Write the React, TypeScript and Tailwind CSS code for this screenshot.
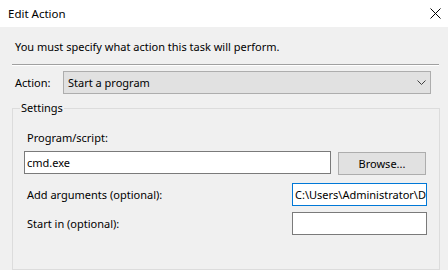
const CloseIcon = () => (
    <svg width="11" height="11" viewBox="0 0 11 11" className="text-black">
        <path d="M0.5 0.5 L10.5 10.5 M10.5 0.5 L0.5 10.5" stroke="currentColor" strokeWidth="1" fill="none" />
    </svg>
);

const Chevron = () => (
    <svg width="9" height="5" viewBox="0 0 9 5" className="text-[#404040]">
        <path d="M0.5 0.5 L4.5 4.5 L8.5 0.5" stroke="currentColor" strokeWidth="1" fill="none" />
    </svg>
);

export default function App() {
    return (
        <div className="w-[448px] h-[270px] overflow-hidden flex flex-col font-['Noto_Sans',sans-serif] text-[11px] leading-4 text-black">
            {/* Title bar */}
            <div className="h-[27px] bg-white flex items-center justify-between pl-[8px] pr-[7px] shrink-0 text-[11.5px]">
                <span>Edit Action</span>
                <CloseIcon />
            </div>

            {/* Dialog body */}
            <div className="flex-1 bg-[#f0f0f0] flex flex-col">
                <p className="pl-[15px] pt-[12px]">You must specify what action this task will perform.</p>

                <div className="ml-3 mr-[9px] mt-[9px] border-t border-t-[#a0a0a0] border-b border-b-white" />

                {/* Action */}
                <div className="mt-[5px] flex items-center">
                    <span className="pl-[15px] w-[63px]">Action:</span>
                    <div className="w-[368px] h-[23px] border border-[#adadad] bg-[#e1e1e1] flex items-center justify-between pl-[4px] pr-[4px]">
                        <span>Start a program</span>
                        <Chevron />
                    </div>
                </div>

                {/* Settings group */}
                <div className="mt-[14px] ml-3 w-[428px] flex-1 relative border border-[#dcdcdc] flex flex-col">
                    <span className="absolute -top-[9px] left-[7px] px-[1px] bg-[#f0f0f0]">Settings</span>

                    <span className="pl-[14px] pt-[21px]">Program/script:</span>
                    <div className="mt-[5px] flex items-start">
                        <div className="ml-[11px] w-[307px] h-[23px] border border-[#7a7a7a] bg-white flex items-center pl-[2px]">
                            cmd.exe
                        </div>
                        <button className="ml-[7px] mt-[1px] w-[88px] h-[23px] border border-[#adadad] bg-[#e1e1e1] flex items-center justify-center">
                            Browse...
                        </button>
                    </div>

                    <div className="mt-[8px] flex items-center">
                        <span className="pl-[14px] w-[279px]">Add arguments (optional):</span>
                        <div className="w-[135px] h-[23px] border border-[#0078d7] bg-white flex items-center pl-[2px] overflow-hidden whitespace-nowrap">
                            <span className="w-px h-[14px] bg-black" />
                            <span>C:\Users\Administrator\Desktop</span>
                        </div>
                    </div>

                    <div className="mt-[6px] flex items-center">
                        <span className="pl-[14px] w-[279px]">Start in (optional):</span>
                        <div className="w-[135px] h-[23px] border border-[#7a7a7a] bg-white" />
                    </div>
                </div>
            </div>
        </div>
    );
}
